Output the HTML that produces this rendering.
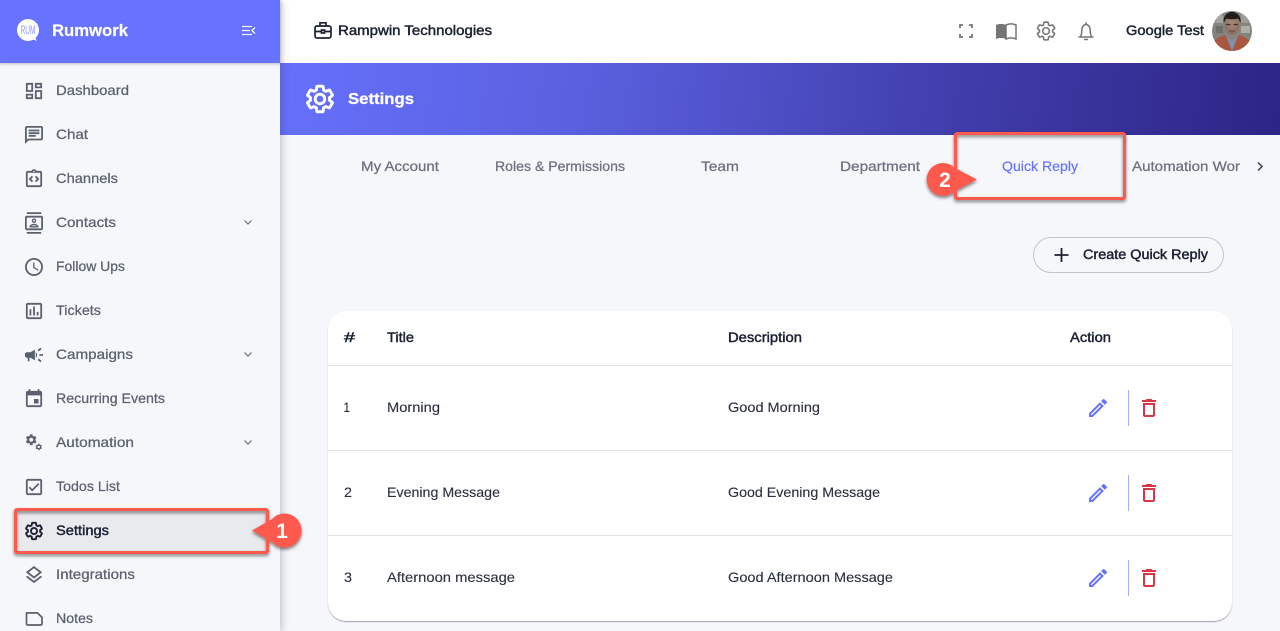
<!DOCTYPE html>
<html lang="en"><head><meta charset="utf-8"><title>Quick Reply Settings</title>
<style>
html,body{margin:0;padding:0;width:1280px;height:631px;overflow:hidden;background:#f5f7fb;font-family:"Liberation Sans",sans-serif}
.abs{position:absolute}
svg{position:absolute;left:0;top:0}
text{font-family:"Liberation Sans",sans-serif;font-size:14px}
.m{fill:#5a6070;stroke:#5a6070;stroke-width:.25px}
.d{fill:#1b2133;stroke:#1b2133;stroke-width:.45px}
.t{fill:#6b7080;stroke:#6b7080;stroke-width:.25px}
.r{fill:#2a2f3f;stroke:#2a2f3f;stroke-width:.12px}
.ic{fill:#5a6070}
</style></head><body>
<div class="abs" style="left:280px;top:0;width:1000px;height:63px;background:#fff"></div>
<div class="abs" style="left:280px;top:63px;width:1000px;height:72px;background:linear-gradient(97deg,#6570fb 0%,#5a60de 30%,#3f3ba8 70%,#2c2586 100%)"></div>
<div class="abs" style="left:0;top:0;width:280px;height:631px;background:#f5f7fb;box-shadow:2px 0 7px rgba(60,60,80,.28)"></div>
<div class="abs" style="left:0;top:0;width:280px;height:63px;background:#6772ff;box-shadow:0 1px 3px rgba(60,60,80,.3)"></div>
<div class="abs" style="left:328px;top:311px;width:904px;height:310px;background:#fff;border-radius:18px;box-shadow:0 1px 1px rgba(60,60,70,.45)"></div>
<div class="abs" style="left:328px;top:365px;width:904px;height:1px;background:#e2e2e4"></div>
<div class="abs" style="left:328px;top:450px;width:904px;height:1px;background:#e2e2e4"></div>
<div class="abs" style="left:328px;top:535px;width:904px;height:1px;background:#e2e2e4"></div>
<div class="abs" style="left:1033px;top:237px;width:189px;height:34px;border:1px solid #c3c5cb;border-radius:18px"></div>
<div class="abs" style="left:1128px;top:390px;width:1px;height:36px;background:#a5acff"></div>
<div class="abs" style="left:1128px;top:475px;width:1px;height:36px;background:#a5acff"></div>
<div class="abs" style="left:1128px;top:560px;width:1px;height:36px;background:#a5acff"></div>

<svg width="1280" height="631" viewBox="0 0 1280 631" xmlns="http://www.w3.org/2000/svg">
<defs>
<filter id="sh" x="-10%" y="-10%" width="125%" height="130%"><feDropShadow dx="0" dy="2" stdDeviation="1.5" flood-color="#000" flood-opacity=".5"/></filter>
<path id="gear" d="M19.14 12.94c.04-.3.06-.61.06-.94 0-.32-.02-.64-.07-.94l2.03-1.58c.18-.14.23-.41.12-.61l-1.92-3.32c-.12-.22-.37-.29-.59-.22l-2.39.96c-.5-.38-1.03-.7-1.62-.94l-.36-2.54c-.04-.24-.24-.41-.48-.41h-3.84c-.24 0-.43.17-.47.41l-.36 2.54c-.59.24-1.13.57-1.62.94l-2.39-.96c-.22-.08-.47 0-.59.22L2.74 8.87c-.12.21-.08.47.12.61l2.03 1.58c-.05.3-.09.63-.09.94s.02.64.07.94l-2.03 1.58c-.18.14-.23.41-.12.61l1.92 3.32c.12.22.37.29.59.22l2.39-.96c.5.38 1.03.7 1.62.94l.36 2.54c.05.24.24.41.48.41h3.84c.24 0 .44-.17.47-.41l.36-2.54c.59-.24 1.13-.56 1.62-.94l2.39.96c.22.08.47 0 .59-.22l1.92-3.32c.12-.22.07-.47-.12-.61l-2.01-1.58zM12 15.6c-1.98 0-3.6-1.62-3.6-3.6s1.62-3.6 3.6-3.6 3.6 1.62 3.6 3.6-1.62 3.6-3.6 3.6z"/>
<path id="edit" d="M3 17.25V21h3.75L17.81 9.94l-3.75-3.75L3 17.25zM5.92 19H5v-.92l9.06-9.06.92.92L5.92 19zM20.71 7.04c.39-.39.39-1.02 0-1.41l-2.34-2.34c-.2-.2-.45-.29-.71-.29s-.51.1-.7.29l-1.83 1.83 3.75 3.75 1.83-1.83z"/>
<path id="del" d="M16 9v10H8V9h8m-1.5-6h-5l-1 1H5v2h14V4h-3.5l-1-1zM18 7H6v12c0 1.1.9 2 2 2h8c1.1 0 2-.9 2-2V7z"/>
<radialGradient id="face" cx=".5" cy=".4" r=".7"><stop offset="0" stop-color="#a98a78"/><stop offset="1" stop-color="#85685a"/></radialGradient>
<clipPath id="av"><circle cx="1232" cy="31" r="20"/></clipPath>
</defs>

<!-- top-left brand -->
<circle cx="28" cy="30" r="11" fill="#fff"/>
<path d="M32 39l5 2-3-5z" fill="#fff"/>
<text x="20.500" y="34" textLength="15" lengthAdjust="spacingAndGlyphs" style="font-size:12px" fill="#8f98ff">RUM</text>
<text x="52" y="36" textLength="76" lengthAdjust="spacingAndGlyphs" fill="#fff" stroke="#fff" stroke-width=".2" style="font-size:16.5px;font-weight:bold">Rumwork</text>
<path d="M242 26.500h10M242 30.500h8M242 34.500h10M255 27.500l-3 3 3 3" fill="none" stroke="#fff" stroke-width="1.300"/>

<!-- settings highlight fill -->
<rect x="16" y="510" width="251" height="42" fill="#e9eaee"/>

<!-- sidebar icons -->
<g class="ic">
<path transform="translate(23.200 80.200) scale(.9)" d="M19 5v2h-4V5h4M9 5v6H5V5h4m10 8v6h-4v-6h4M9 17v2H5v-2h4M21 3h-8v6h8V3zM11 3H3v10h8V3zm10 8h-8v10h8V11zm-10 4H3v6h8v-6z"/>
<path transform="translate(23.200 124.200) scale(.9)" d="M4 4h16v12H5.170L4 17.170V4m0-2c-1.100 0-1.990.9-1.990 2L2 22l4-4h14c1.100 0 2-.9 2-2V4c0-1.100-.9-2-2-2H4zm2 10h8v2H6v-2zm0-3h12v2H6V9zm0-3h12v2H6V6z"/>
<path transform="translate(23.200 168.200) scale(.9)" d="M11 14.170 8.830 12 11 9.830 9.590 8.410 6 12l3.590 3.590zM14.410 15.590 18 12l-3.590-3.590L13 9.830 15.170 12 13 14.170zM19 3h-4.180C14.400 1.840 13.300 1 12 1s-2.400.84-2.820 2H5c-.14 0-.27.01-.4.04-.39.08-.74.28-1.010.55-.18.18-.33.4-.43.64-.1.23-.16.49-.16.77v14c0 .27.06.54.16.78s.25.45.43.64c.27.27.62.47 1.010.55.13.02.26.03.4.03h14c1.100 0 2-.9 2-2V5c0-1.100-.9-2-2-2zm-7-.25c.41 0 .75.34.75.75s-.34.75-.75.75-.75-.34-.75-.75.34-.75.75-.75zM19 19H5V5h14v14z"/>
<path transform="translate(23.200 212.200) scale(.9)" d="M20 0H4v2h16V0zM4 24h16v-2H4v2zM20 4H4c-1.100 0-2 .9-2 2v12c0 1.100.9 2 2 2h16c1.100 0 2-.9 2-2V6c0-1.100-.9-2-2-2zm0 14H4V6h16v12zm-8-6c1.380 0 2.500-1.120 2.500-2.500S13.380 7 12 7 9.500 8.120 9.500 9.500 10.620 12 12 12zm0-3.500c.55 0 1 .45 1 1s-.45 1-1 1-1-.45-1-1 .45-1 1-1zm5 7.490C17 13.900 13.690 13 12 13s-5 .9-5 2.990V17h10v-1.010zm-8.190-.49c.61-.52 2.030-1 3.190-1 1.170 0 2.590.48 3.200 1H8.810z"/>
<path transform="translate(23.200 256.200) scale(.9)" d="M11.990 2C6.470 2 2 6.480 2 12s4.470 10 9.990 10C17.520 22 22 17.520 22 12S17.520 2 11.990 2zM12 20c-4.420 0-8-3.580-8-8s3.580-8 8-8 8 3.580 8 8-3.580 8-8 8zm.5-13H11v6l5.250 3.150.75-1.230-4.500-2.670z"/>
<path transform="translate(23.200 300.200) scale(.9)" d="M19 3H5c-1.100 0-2 .9-2 2v14c0 1.100.9 2 2 2h14c1.100 0 2-.9 2-2V5c0-1.100-.9-2-2-2zm0 16H5V5h14v14zM7 10h2v7H7zm4-3h2v10h-2zm4 6h2v4h-2z"/>
<path transform="translate(23.200 344.200) scale(.9)" d="M18 11v2h4v-2h-4zm-2 6.610c.96.71 2.210 1.650 3.200 2.390.4-.53.8-1.070 1.200-1.600-.99-.74-2.240-1.680-3.200-2.400-.4.54-.8 1.080-1.200 1.610zM20.400 5.600c-.4-.53-.8-1.070-1.200-1.600-.99.74-2.240 1.680-3.200 2.400.4.53.8 1.070 1.200 1.600.96-.72 2.210-1.650 3.200-2.400zM4 9c-1.100 0-2 .9-2 2v2c0 1.100.9 2 2 2h1v4h2v-4h1l5 3V6L8 9H4zM15.500 12c0-1.330-.58-2.530-1.500-3.350v6.690c.92-.81 1.500-2.010 1.500-3.340z"/>
<path transform="translate(23.200 388.200) scale(.9)" d="M17 12h-5v5h5v-5zM16 1v2H8V1H6v2H5c-1.110 0-1.990.9-1.990 2L3 19c0 1.100.89 2 2 2h14c1.100 0 2-.9 2-2V5c0-1.100-.9-2-2-2h-1V1h-2zm3 18H5V8h14v11z"/>
<use href="#gear" transform="translate(24.500 433) scale(.56)"/>
<use href="#gear" transform="translate(34.800 443) scale(.33)"/>
<path transform="translate(23.200 476.200) scale(.9)" d="M19 3H5c-1.100 0-2 .9-2 2v14c0 1.100.9 2 2 2h14c1.100 0 2-.9 2-2V5c0-1.100-.9-2-2-2zm0 16H5V5h14v14zM17.990 9l-1.410-1.420-6.590 6.590-2.580-2.570-1.420 1.410 4 3.990z"/>
<path transform="translate(23.200 564.200) scale(.9)" d="M11.990 18.540l-7.370-5.730L3 14.070l9 7 9-7-1.630-1.270zM12 16l7.360-5.730L21 9l-9-7-9 7 1.630 1.270L12 16zm0-11.470L17.740 9 12 13.470 6.260 9 12 4.530z"/>
</g>
<use href="#gear" transform="translate(23.800 520.800) scale(.85)" fill="none" stroke="#1b2133" stroke-width="2.200"/>
<path d="M27 612.900h10.500l4.500 4.500v6.600c0 .5-.5 1-1 1H27.500c-.5 0-1-.5-1-1v-10.600c0-.3.2-.5.5-.5z" fill="none" stroke="#5a6070" stroke-width="1.700"/>
<path d="M244.500 220.500l3.500 3.500 3.500-3.500M244.500 352.500l3.500 3.500 3.500-3.500M244.500 440.500l3.500 3.500 3.500-3.500" fill="none" stroke="#6a6f7d" stroke-width="1.200"/>

<!-- sidebar text -->
<text class="m" x="56" y="95" textLength="73" lengthAdjust="spacingAndGlyphs">Dashboard</text>
<text class="m" x="56" y="139" textLength="32" lengthAdjust="spacingAndGlyphs">Chat</text>
<text class="m" x="56" y="183" textLength="62" lengthAdjust="spacingAndGlyphs">Channels</text>
<text class="m" x="56" y="227" textLength="60" lengthAdjust="spacingAndGlyphs">Contacts</text>
<text class="m" x="56" y="271" textLength="69" lengthAdjust="spacingAndGlyphs">Follow Ups</text>
<text class="m" x="56" y="315" textLength="45" lengthAdjust="spacingAndGlyphs">Tickets</text>
<text class="m" x="56" y="359" textLength="77" lengthAdjust="spacingAndGlyphs">Campaigns</text>
<text class="m" x="56" y="403" textLength="109" lengthAdjust="spacingAndGlyphs">Recurring Events</text>
<text class="m" x="56" y="447" textLength="78" lengthAdjust="spacingAndGlyphs">Automation</text>
<text class="m" x="56" y="491" textLength="64" lengthAdjust="spacingAndGlyphs">Todos List</text>
<text class="d" x="56" y="535" textLength="53" lengthAdjust="spacingAndGlyphs">Settings</text>
<text class="m" x="56" y="579" textLength="79" lengthAdjust="spacingAndGlyphs">Integrations</text>
<text class="m" x="56" y="623" textLength="37" lengthAdjust="spacingAndGlyphs">Notes</text>

<!-- header -->
<g fill="none" stroke="#1b2133" stroke-width="1.700">
<rect x="315" y="26" width="16" height="12" rx="2"/><path d="M320 26v-3.200h6V26M315 31.500h16"/><rect x="321.500" y="30" width="3" height="3" fill="#fff"/>
</g>
<text class="d" x="338" y="35" textLength="154" lengthAdjust="spacingAndGlyphs">Rampwin Technologies</text>
<path d="M960 28v-3h3M969 25h3v3M972 34v3h-3M963 37h-3v-3" fill="none" stroke="#757575" stroke-width="1.800"/>
<path d="M996 25c3-1.300 7-1.300 10 0v14c-3-1.300-7-1.300-10 0z" fill="#757575"/>
<path d="M1006 25c3-1.300 7-1.300 10 0v14c-3-1.300-7-1.300-10 0z" fill="none" stroke="#757575" stroke-width="1.500"/>
<use href="#gear" transform="translate(1035 20) scale(.92)" fill="none" stroke="#757575" stroke-width="1.700"/>
<path d="M1078.500 37h15M1080.500 36.500c1-1.500 1.300-3.500 1.300-6.500 0-3 1.800-5.500 4.200-5.500s4.200 2.500 4.200 5.500c0 3 .3 5 1.300 6.500M1086 24.500v-2.300M1084 39.500h4" fill="none" stroke="#757575" stroke-width="1.500"/>
<text class="d" x="1126" y="35" textLength="78" lengthAdjust="spacingAndGlyphs">Google Test</text>
<g clip-path="url(#av)">
<rect x="1212" y="11" width="40" height="40" fill="#85847f"/>
<rect x="1214" y="15" width="9" height="8" fill="#a5a39e"/><rect x="1216" y="26" width="7" height="7" fill="#6f6e6a"/>
<rect x="1241" y="14" width="9" height="9" fill="#a09e98"/><rect x="1241" y="26" width="9" height="7" fill="#b0aea8"/>
<path d="M1212 51v-7c3-5 9-8 13-9l7 6 7-6c4 1 10 4 13 9v7z" fill="#a9573f"/>
<path d="M1226 36l6 15 6-15-6 5z" fill="#7f93ab"/>
<ellipse cx="1232" cy="25" rx="7.500" ry="10" fill="url(#face)"/>
<path d="M1224 23c-1.500-6 2.500-11 8-11s9.500 5 8.500 11c-.8-2-1.500-3.500-2.500-4.500-4 1-8 1-11.500 0-1 1-2 2.500-2.500 4.500z" fill="#211b1b"/>
<path d="M1226 24.500h4.500M1233.500 24.500h4.500" stroke="#3a2f2e" stroke-width="1.200"/>
<path d="M1229 31h6" stroke="#5d3d36" stroke-width="1"/>
</g>

<!-- banner -->
<use href="#gear" transform="translate(304 83) scale(1.330)" fill="none" stroke="#fff" stroke-width="2.200"/>
<text x="348" y="104" textLength="66" lengthAdjust="spacingAndGlyphs" fill="#fff" stroke="#fff" stroke-width=".3" style="font-size:16px;font-weight:bold">Settings</text>

<!-- tabs -->
<text class="t" x="361" y="171" textLength="78" lengthAdjust="spacingAndGlyphs">My Account</text>
<text class="t" x="495" y="171" textLength="130" lengthAdjust="spacingAndGlyphs">Roles &amp; Permissions</text>
<text class="t" x="701" y="171" textLength="38" lengthAdjust="spacingAndGlyphs">Team</text>
<text class="t" x="840" y="171" textLength="80" lengthAdjust="spacingAndGlyphs">Department</text>
<text x="1002" y="171" textLength="76" lengthAdjust="spacingAndGlyphs" fill="#6772ff" stroke="#6772ff" stroke-width=".2">Quick Reply</text>
<text class="t" x="1132" y="171" textLength="108" lengthAdjust="spacingAndGlyphs">Automation Wor</text>
<path d="M1258 162.500l4 4-4 4" fill="none" stroke="#3a3f4d" stroke-width="1.500"/>

<!-- create button -->
<path d="M1061.500 248v14M1054.500 255h14" fill="none" stroke="#1b2133" stroke-width="1.800"/>
<text class="d" x="1083" y="259" textLength="125" lengthAdjust="spacingAndGlyphs">Create Quick Reply</text>

<!-- table -->
<text class="d" x="344" y="342" textLength="11" lengthAdjust="spacingAndGlyphs">#</text>
<text class="d" x="387" y="342" textLength="27" lengthAdjust="spacingAndGlyphs">Title</text>
<text class="d" x="728" y="342" textLength="74" lengthAdjust="spacingAndGlyphs">Description</text>
<text class="d" x="1070" y="342" textLength="41" lengthAdjust="spacingAndGlyphs">Action</text>
<text class="r" x="343.500" y="412" textLength="6.500" lengthAdjust="spacingAndGlyphs">1</text>
<text class="r" x="387" y="412" textLength="53" lengthAdjust="spacingAndGlyphs">Morning</text>
<text class="r" x="728" y="412" textLength="92" lengthAdjust="spacingAndGlyphs">Good Morning</text>
<text class="r" x="344" y="497" textLength="8" lengthAdjust="spacingAndGlyphs">2</text>
<text class="r" x="387" y="497" textLength="113" lengthAdjust="spacingAndGlyphs">Evening Message</text>
<text class="r" x="728" y="497" textLength="152" lengthAdjust="spacingAndGlyphs">Good Evening Message</text>
<text class="r" x="344" y="582" textLength="8" lengthAdjust="spacingAndGlyphs">3</text>
<text class="r" x="387" y="582" textLength="128" lengthAdjust="spacingAndGlyphs">Afternoon message</text>
<text class="r" x="728" y="582" textLength="165" lengthAdjust="spacingAndGlyphs">Good Afternoon Message</text>
<g fill="#6772ff">
<use href="#edit" transform="translate(1086 396)"/>
<use href="#edit" transform="translate(1086 481)"/>
<use href="#edit" transform="translate(1086 566)"/>
</g>
<g fill="#dc3545">
<use href="#del" transform="translate(1137 396)"/>
<use href="#del" transform="translate(1137 481)"/>
<use href="#del" transform="translate(1137 566)"/>
</g>

<!-- annotations -->
<g filter="url(#sh)">
<rect x="15.500" y="509.500" width="252" height="43" rx="1.500" fill="none" stroke="#fd5a4e" stroke-width="3"/>
<rect x="955.500" y="133.500" width="169" height="65" rx="1.500" fill="none" stroke="#fd5a4e" stroke-width="3"/>
<path d="M252 530.500L272 519a17 17 0 1 1 0 23z" fill="#fd5a4e"/>
<path d="M977 179.500L955 168a16.500 16.500 0 1 0 0 23z" fill="#fd5a4e"/>
</g>
<text x="282" y="538" text-anchor="middle" fill="#fff" style="font-size:21px;font-weight:bold">1</text>
<text x="945" y="187" text-anchor="middle" fill="#fff" style="font-size:21px;font-weight:bold">2</text>
</svg>
</body></html>
